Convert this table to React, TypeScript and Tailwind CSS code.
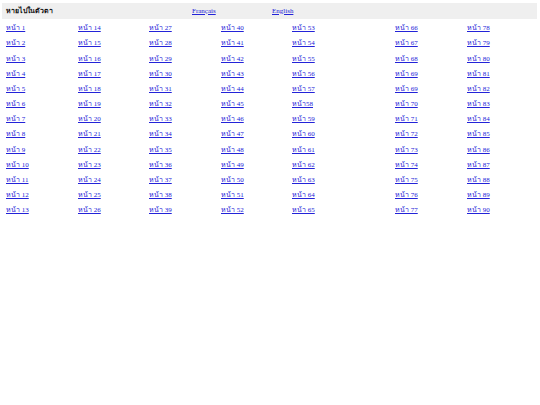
const columns: string[][] = [
  Array.from({ length: 13 }, (_, i) => `หน้า ${i + 1}`),
  Array.from({ length: 13 }, (_, i) => `หน้า ${i + 14}`),
  Array.from({ length: 13 }, (_, i) => `หน้า ${i + 27}`),
  Array.from({ length: 13 }, (_, i) => `หน้า ${i + 40}`),
  Array.from({ length: 13 }, (_, i) => (i + 53 === 58 ? 'หน้า58' : `หน้า ${i + 53}`)),
  ['หน้า 66', 'หน้า 67', 'หน้า 68', 'หน้า 69', 'หน้า 69', 'หน้า 70', 'หน้า 71', 'หน้า 72', 'หน้า 73', 'หน้า 74', 'หน้า 75', 'หน้า 76', 'หน้า 77'],
  Array.from({ length: 13 }, (_, i) => `หน้า ${i + 78}`),
]

const colWidths = ['w-[72px]', 'w-[71px]', 'w-[72px]', 'w-[71px]', 'w-[103px]', 'w-[72px]', 'flex-1']

export default function App() {
  return (
    <div className="min-h-[405px] w-[540px] bg-white px-[2px] pt-[3px] font-['Liberation_Serif',serif] text-[7px]">
      {/* header bar */}
      <div className="flex h-[16px] w-[535px] items-center bg-[#efefef] pl-[4px]">
        <span className="w-[186px] font-['Liberation_Sans',sans-serif] font-bold text-[#111]">หายไปในตัวตา</span>
        <a href="#" className="w-[80px] text-[#2323d8] underline">Français</a>
        <a href="#" className="text-[#2323d8] underline">English</a>
      </div>

      {/* page links */}
      <div className="flex pl-[4px] pt-[2px]">
        {columns.map((col, ci) => (
          <div key={ci} className={`flex flex-col ${colWidths[ci]}`}>
            {col.map((label, ri) => (
              <div key={ri} className="flex h-[15.17px] items-center">
                <a href="#" className="text-[#2323d8] underline">{label}</a>
              </div>
            ))}
          </div>
        ))}
      </div>
    </div>
  )
}
